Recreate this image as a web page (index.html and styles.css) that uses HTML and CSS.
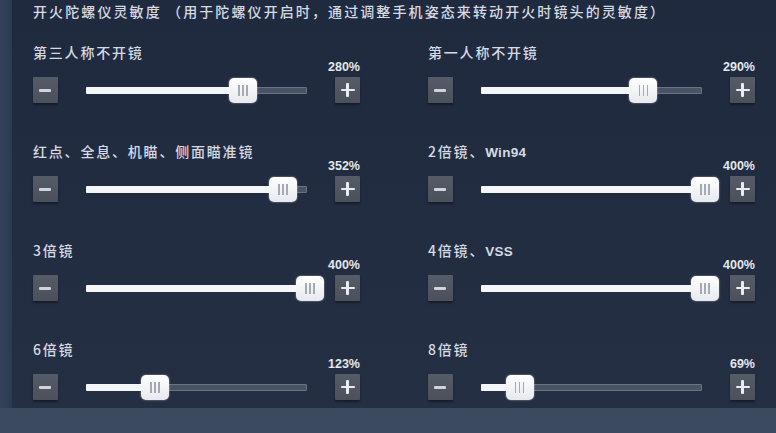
FILE: index.html
```html
<!DOCTYPE html>
<html lang="zh-CN">
<head>
<meta charset="utf-8">
<title>开火陀螺仪灵敏度</title>
<link rel="stylesheet" href="styles.css">
</head>
<body>
<div class="screen">
  <div class="edge"></div>
  <div class="panel">
    <div class="title">开火陀螺仪灵敏度 （用于陀螺仪开启时，通过调整手机姿态来转动开火时镜头的灵敏度）</div>
    <div class="grid">
      <div class="item">
        <div class="label">第三人称不开镜</div>
        <div class="value">280%</div>
        <div class="controls">
          <button class="btn minus"><span class="bar"></span></button>
          <div class="track" style="--p:0.70"><div class="fill"></div><div class="thumb"><i></i><i></i><i></i></div></div>
          <button class="btn plus"><span class="bar"></span><span class="bar v"></span></button>
        </div>
      </div>
      <div class="item">
        <div class="label">第一人称不开镜</div>
        <div class="value">290%</div>
        <div class="controls">
          <button class="btn minus"><span class="bar"></span></button>
          <div class="track" style="--p:0.725"><div class="fill"></div><div class="thumb"><i></i><i></i><i></i></div></div>
          <button class="btn plus"><span class="bar"></span><span class="bar v"></span></button>
        </div>
      </div>
      <div class="item">
        <div class="label">红点、全息、机瞄、侧面瞄准镜</div>
        <div class="value">352%</div>
        <div class="controls">
          <button class="btn minus"><span class="bar"></span></button>
          <div class="track" style="--p:0.88"><div class="fill"></div><div class="thumb"><i></i><i></i><i></i></div></div>
          <button class="btn plus"><span class="bar"></span><span class="bar v"></span></button>
        </div>
      </div>
      <div class="item">
        <div class="label">2倍镜、<span class="latin">Win94</span></div>
        <div class="value">400%</div>
        <div class="controls">
          <button class="btn minus"><span class="bar"></span></button>
          <div class="track" style="--p:1"><div class="fill"></div><div class="thumb"><i></i><i></i><i></i></div></div>
          <button class="btn plus"><span class="bar"></span><span class="bar v"></span></button>
        </div>
      </div>
      <div class="item">
        <div class="label">3倍镜</div>
        <div class="value">400%</div>
        <div class="controls">
          <button class="btn minus"><span class="bar"></span></button>
          <div class="track" style="--p:1"><div class="fill"></div><div class="thumb"><i></i><i></i><i></i></div></div>
          <button class="btn plus"><span class="bar"></span><span class="bar v"></span></button>
        </div>
      </div>
      <div class="item">
        <div class="label">4倍镜、<span class="latin">VSS</span></div>
        <div class="value">400%</div>
        <div class="controls">
          <button class="btn minus"><span class="bar"></span></button>
          <div class="track" style="--p:1"><div class="fill"></div><div class="thumb"><i></i><i></i><i></i></div></div>
          <button class="btn plus"><span class="bar"></span><span class="bar v"></span></button>
        </div>
      </div>
      <div class="item">
        <div class="label">6倍镜</div>
        <div class="value">123%</div>
        <div class="controls">
          <button class="btn minus"><span class="bar"></span></button>
          <div class="track" style="--p:0.3075"><div class="fill"></div><div class="thumb"><i></i><i></i><i></i></div></div>
          <button class="btn plus"><span class="bar"></span><span class="bar v"></span></button>
        </div>
      </div>
      <div class="item">
        <div class="label">8倍镜</div>
        <div class="value">69%</div>
        <div class="controls">
          <button class="btn minus"><span class="bar"></span></button>
          <div class="track" style="--p:0.1725"><div class="fill"></div><div class="thumb"><i></i><i></i><i></i></div></div>
          <button class="btn plus"><span class="bar"></span><span class="bar v"></span></button>
        </div>
      </div>
    </div>
  </div>
</div>
</body>
</html>
```
FILE: styles.css
```css
html, body {
  margin: 0;
  padding: 0;
  background: #3a4960;
}

.screen {
  width: 776px;
  height: 433px;
  display: flex;
  align-items: flex-start;
  background: linear-gradient(#36455b, #3c4a5f);
  font-family: "Noto Sans CJK SC", "Noto Sans", sans-serif;
  color: #d6dae2;
  overflow: hidden;
}

.edge {
  width: 12px;
  height: 408px;
  background: linear-gradient(90deg, #33425a, #2c3a51);
}

.panel {
  flex: 1;
  height: 408px;
  box-sizing: border-box;
  background: linear-gradient(#1f2a3f, #222d42 60%, #252f43);
  padding: 1px 0 0 21px;
}

.title {
  font-size: 14px;
  line-height: 20px;
  letter-spacing: 2.1px;
  font-weight: 500;
  white-space: nowrap;
}

.grid {
  margin-top: 22px;
  display: grid;
  grid-template-columns: 327px 327px;
  column-gap: 68px;
  row-gap: 39px;
}

.item {
  display: flex;
  flex-direction: column;
}

.label {
  height: 18px;
  font-size: 14px;
  line-height: 18px;
  letter-spacing: 1.8px;
  font-weight: 500;
  white-space: nowrap;
}

.latin {
  font-family: "Liberation Sans", Arial, sans-serif;
  font-weight: 700;
  font-size: 13.5px;
  line-height: 1;
  letter-spacing: 0.3px;
}

.value {
  margin-top: -1px;
  text-align: right;
  font-family: "Liberation Sans", Arial, sans-serif;
  font-weight: 700;
  font-size: 12.5px;
  line-height: 14px;
  color: #e4e7ec;
}

.controls {
  margin-top: 3px;
  height: 26px;
  display: flex;
  align-items: center;
  gap: 28px;
}

.btn {
  position: relative;
  width: 25px;
  height: 26px;
  padding: 0;
  border: none;
  border-radius: 1px;
  background: linear-gradient(#565c67, #4b505b);
  box-shadow: 0 2px 2px rgba(10, 14, 24, 0.5);
  flex: none;
}

.bar {
  position: absolute;
  left: 6px;
  top: 11.5px;
  width: 13px;
  height: 3px;
  background: #e9ecf0;
  border-radius: 1px;
}

.minus .bar {
  left: 6px;
  width: 12px;
  background: #d0d4da;
}

.plus .bar {
  left: 5.5px;
  width: 14px;
  top: 11.5px;
  height: 2.5px;
}

.plus .bar.v {
  left: 11.25px;
  top: 6px;
  width: 2.5px;
  height: 14px;
}

.track {
  position: relative;
  width: 221px;
  height: 7px;
  box-sizing: border-box;
  margin-top: 1px;
  background: #4a5364;
  border: 1px solid #6a7382;
  border-radius: 1px;
  flex: none;
}

.fill {
  position: absolute;
  left: -1px;
  top: -1px;
  height: 7px;
  width: min(221px, calc(var(--p) * 224px));
  background: #f4f6f8;
  border-radius: 1px;
}

.thumb {
  position: absolute;
  top: -10px;
  left: calc(var(--p) * 224px - 15px);
  width: 28px;
  height: 25px;
  box-sizing: border-box;
  background: linear-gradient(#ffffff, #e6e9ee);
  border-radius: 5px;
  box-shadow: 0 0 2px rgba(255, 255, 255, 0.6);
  display: flex;
  justify-content: center;
  align-items: center;
  gap: 2.5px;
}

.thumb i {
  display: block;
  width: 1.5px;
  height: 11px;
  background: #a4a9b3;
}
```
